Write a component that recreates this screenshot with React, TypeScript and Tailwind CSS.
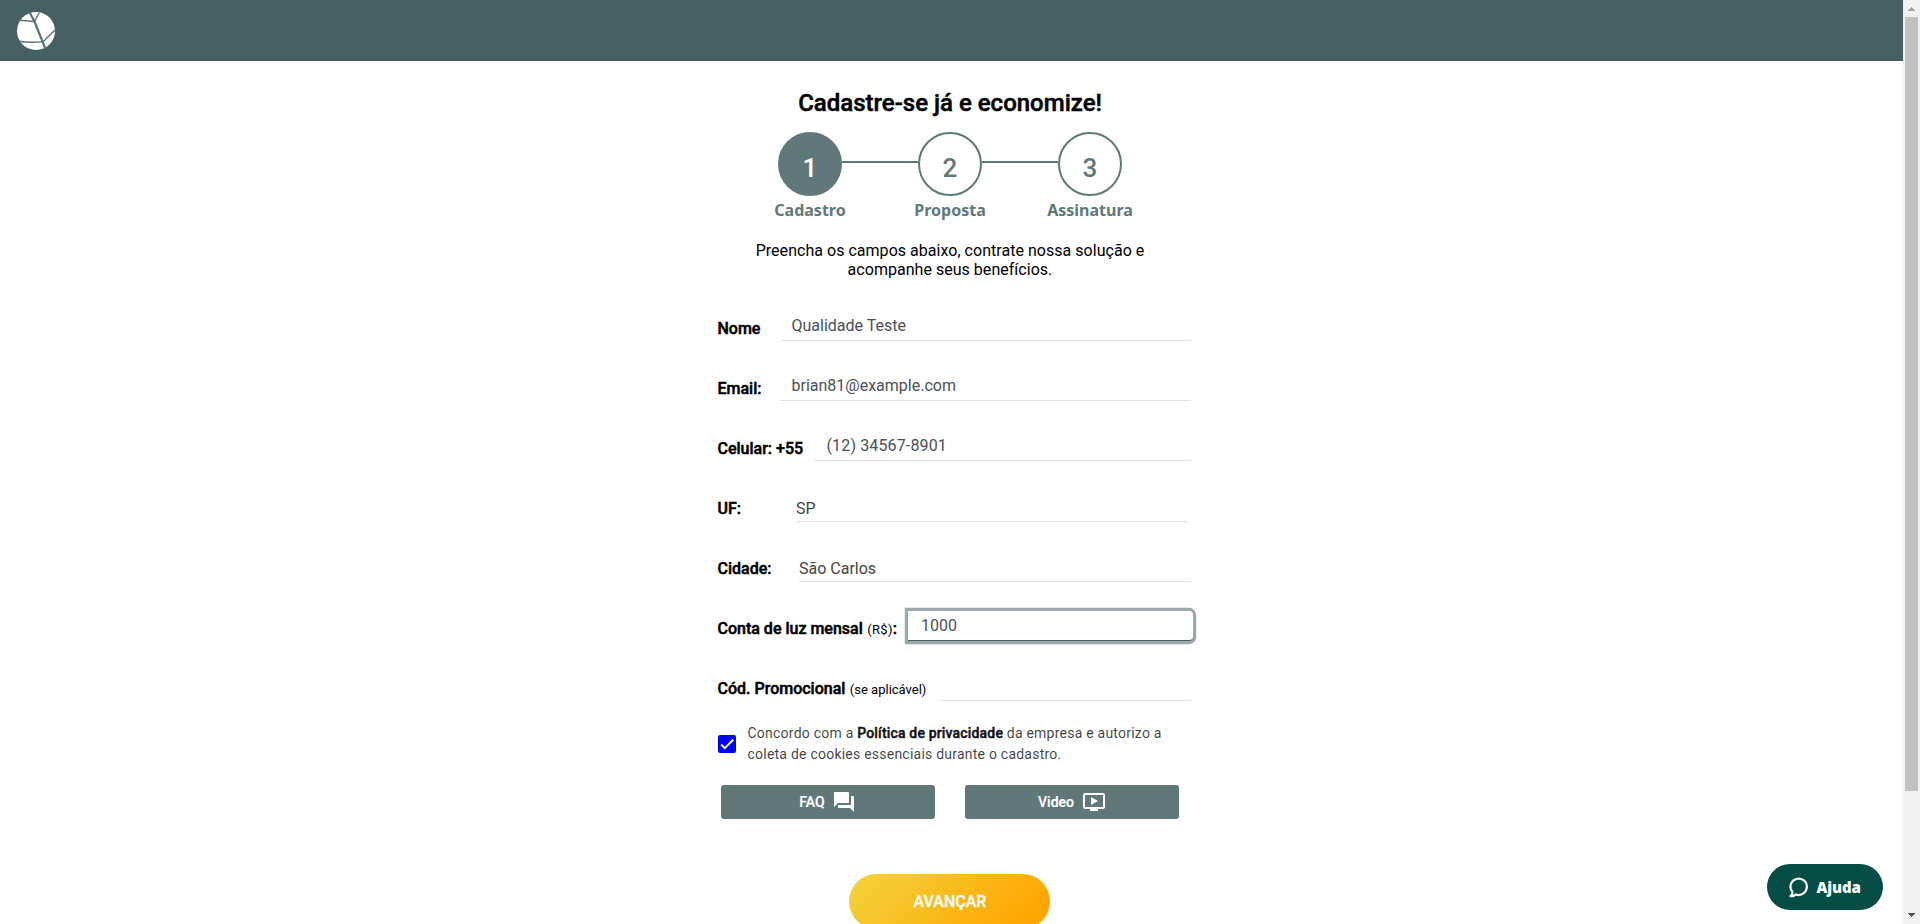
import type { ReactNode } from "react";

const bold = "font-medium [-webkit-text-stroke:0.5px_currentColor]";

function Step({ n, label, active }: { n: number; label: string; active?: boolean }) {
  return (
    <div className="flex w-16 flex-col items-center">
      <div
        className={`flex size-16 items-center justify-center rounded-full border-2 border-[#607879] pt-2 text-[26px] leading-8 font-medium ${
          active ? "bg-[#607879] text-white" : "bg-white text-[#607879]"
        }`}
      >
        {n}
      </div>
      <span className="mt-[3px] font-['Noto_Sans',sans-serif] text-base leading-[22px] font-bold text-[#607879]">{label}</span>
    </div>
  );
}

function Connector() {
  return <div className="mt-[29px] h-0.5 w-[76px] bg-[#607879]" />;
}

function Row({ label, children }: { label: ReactNode; children: ReactNode }) {
  return (
    <div className="flex h-[60px] items-start justify-between">
      <label className={`-ml-[0.5px] pt-[11px] text-base leading-5 whitespace-nowrap text-black ${bold}`}>{label}</label>
      {children}
    </div>
  );
}

function Input({ value, className }: { value: string; className: string }) {
  return (
    <div className={`mt-[3px] h-[30px] rounded-r-[4px] border-b border-[#e0e3e4] pt-[5px] text-base leading-5 text-[#495057] ${className}`}>
      {value}
    </div>
  );
}

export default function App() {
  return (
    <div className="flex h-[924px] w-[1920px] overflow-hidden bg-white font-[Roboto,sans-serif]">
      <div className="flex w-[1903px] flex-col">
        <header className="flex h-[61px] shrink-0 items-center bg-[#455f63] pt-px pl-[17px]">
          <svg width="38" height="38" viewBox="0 0 38 38" fill="none" stroke="#5b7276">
            <circle cx="19" cy="19" r="19" fill="#fff" stroke="none" />
            <path d="M12.700 0.500 L17.500 9.500 L28.300 36.500" strokeWidth="2.200" />
            <path d="M22.300 0.500 L17.500 9.500 L3 8.200 M1.500 29.200 Q14 31 26.300 29.600 Q32 24 38 18" strokeWidth="1.400" />
          </svg>
        </header>
        <main className="ml-[718px] flex w-[464px] flex-col items-center">
          <h1 className={`mt-[26px] text-2xl leading-8 whitespace-nowrap text-black ${bold}`}>Cadastre-se já e economize!</h1>
          <div className="mt-[13px] flex justify-center">
            <Step n={1} label="Cadastro" active />
            <Connector />
            <Step n={2} label="Proposta" />
            <Connector />
            <Step n={3} label="Assinatura" />
          </div>
          <p className="mt-5 text-center text-base leading-[19px] tracking-[0.03px] text-black">
            Preencha os campos abaixo, contrate nossa solução e
            <br />
            acompanhe seus benefícios.
          </p>
          <form className="mt-[29px] w-full">
            <div className="w-[475px]">
              <Row label="Nome"><Input value="Qualidade Teste" className="w-[413px] pl-[11.5px]" /></Row>
              <Row label="Email:"><Input value="brian81@example.com" className="w-[413px] pl-[11.5px]" /></Row>
              <Row label="Celular: +55"><Input value="(12) 34567-8901" className="w-[379px] pl-[12.5px] tracking-[0.14px]" /></Row>
              <Row label="UF:">
                <div className="mr-[5px] h-[34px] w-[392px] border-b border-[#e0e0e0] pt-[11px] text-base leading-5 text-[#444]">SP</div>
              </Row>
              <Row label="Cidade:">
                <div className="mr-0.5 h-[34px] w-[392px] border-b border-[#e0e0e0] pt-[11px] text-base leading-5 text-[#444]">São Carlos</div>
              </Row>
              <Row
                label={
                  <>
                    Conta de luz mensal <small className="ml-[0.5px] text-[13px] font-normal tracking-[0.3px] [-webkit-text-stroke:0]">(R$)</small>:
                  </>
                }
              >
                <div className="mt-[3px] h-[30px] w-[285px] rounded-r-[4px] border-b border-[#455f63] bg-white pt-[5px] pl-[13px] text-base leading-5 text-[#495057] shadow-[0_0_0_3.2px_#9ba9ab]">
                  1000
                </div>
              </Row>
              <Row
                label={
                  <>
                    Cód. Promocional <small className="ml-[0.5px] text-[13px] font-normal [-webkit-text-stroke:0]">(se aplicável)</small>
                  </>
                }
              >
                <Input value="" className="w-[254px]" />
              </Row>
            </div>
            <div className="-mt-[5px] flex items-center">
              <div className="flex size-[18px] items-center justify-center rounded-[2px] bg-[#0000ff]">
                <svg width="18" height="18" viewBox="0 0 24 24" fill="none" stroke="#fff" strokeWidth="2.600">
                  <path d="M4.100 12.700 9 17.600 20.300 6.300" />
                </svg>
              </div>
              <p className="ml-[11.5px] text-sm leading-[21px] tracking-[0.23px] whitespace-nowrap text-black/75">
                Concordo com a <b className={`tracking-[0.17px] text-black/90 ${bold}`}>Política de privacidade</b> da empresa e autorizo a
                <br />
                coleta de cookies essenciais durante o cadastro.
              </p>
            </div>
            <div className="mt-[20px] ml-[3px] flex gap-[30px]">
              <button type="button" className="flex h-[34px] w-[214px] items-center justify-center gap-[7px] rounded-[3px] bg-[#607879] pr-px text-sm font-medium text-white [-webkit-text-stroke:0.2px_currentColor]">
                FAQ
                <svg width="24" height="24" viewBox="0 0 24 24" fill="currentColor" stroke="none">
                  <path d="M21 6h-2v9H6v2c0 .55.45 1 1 1h11l4 4V7c0-.55-.45-1-1-1zm-4 6V3c0-.55-.45-1-1-1H3c-.55 0-1 .45-1 1v14l4-4h10c.55 0 1-.45 1-1z" />
                </svg>
              </button>
              <button type="button" className="flex h-[34px] w-[214px] items-center justify-center gap-2 rounded-[3px] bg-[#607879] text-sm font-medium text-white [-webkit-text-stroke:0.2px_currentColor]">
                Video
                <svg width="24" height="24" viewBox="0 0 24 24" fill="currentColor" stroke="none">
                  <path d="M21 3H3c-1.110 0-2 .89-2 2v12c0 1.100.89 2 2 2h5v2h8v-2h5c1.100 0 1.990-.9 1.990-2L23 5c0-1.110-.9-2-2-2zm0 14H3V5h18v12zm-5-6l-7 4V7z" />
                </svg>
              </button>
            </div>
          </form>
          <button type="button" className="mt-[55px] mr-px h-[55px] w-[201px] shrink-0 rounded-full bg-[linear-gradient(135deg,#f3d43c_0%,#ffa500_90%)] pl-px text-base font-medium text-white [-webkit-text-stroke:0.3px_currentColor]">
            AVANÇAR
          </button>
        </main>
      </div>
      <div className="flex w-[17px] flex-col items-center justify-between bg-[#f1f1f1]">
        <svg width="17" height="17" viewBox="0 0 17 17" fill="#a3a3a3" shapeRendering="crispEdges">
          <path d="M8 7h1v1h1v1h1v1h1v1H5v-1h1V9h1V8h1z" />
        </svg>
        <div className="mb-auto h-[774px] w-[13px] bg-[#c1c1c1]" />
        <svg width="17" height="17" viewBox="0 0 17 17" fill="#505050" shapeRendering="crispEdges">
          <path d="M5 6h7v1h-1v1h-1v1H9v1H8V9H7V8H6V7H5z" />
        </svg>
      </div>
      <button type="button" className="absolute top-[864px] left-[1767px] flex h-[46px] w-[116px] items-center rounded-full bg-[#054d44] pl-[22px] font-['Open_Sans',sans-serif] text-[15px] font-extrabold text-white">
        <svg width="20" height="21" viewBox="0 0 20 21" fill="none" stroke="#fff" strokeWidth="2.200" strokeLinejoin="round" strokeLinecap="round">
          <path d="M3.600 15.300A8.200 8.200 0 1 1 6.900 17.500C5.300 19.200 3.500 19.500 1.600 19.200C2.900 18.200 3.500 17 3.600 15.300Z" />
        </svg>
        <span className="ml-[7.5px] pt-px tracking-[-0.1px]">Ajuda</span>
      </button>
    </div>
  );
}
